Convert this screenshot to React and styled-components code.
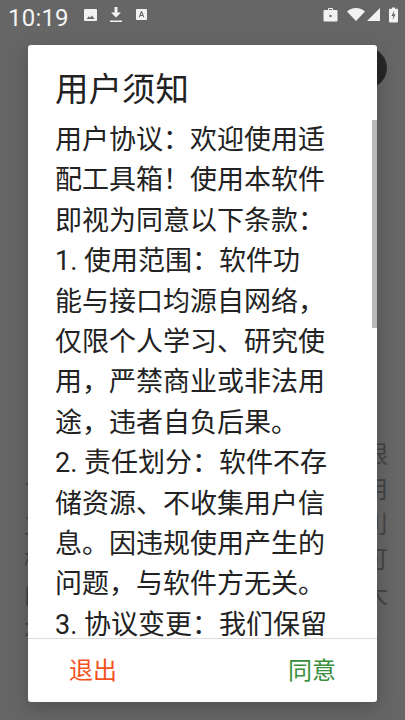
import React from 'react';
import styled, { createGlobalStyle } from 'styled-components';

const CJK = '"Roboto", "Noto Sans CJK SC", sans-serif';

const Global = createGlobalStyle`
  html, body { margin: 0; padding: 0; width: 405px; height: 720px; overflow: hidden; background: #666; font-family: ${CJK}; }
`;

const Screen = styled.div`
  position: relative;
  width: 405px;
  height: 720px;
  overflow: hidden;
  background: #666;
`;

const StatusBar = styled.div`
  height: 34px;
  box-sizing: border-box;
  padding: 1px 7px 0 8px;
  display: flex;
  align-items: center;
  color: #fff;
`;

const Clock = styled.span`
  font-size: 24px;
  color: #f4f4f4;
  letter-spacing: 0.2px;
  margin-right: 15px;
`;

const StatusIcons = styled.div`
  display: flex;
  align-items: center;
  gap: ${p => p.$gap}px;
  margin-left: ${p => (p.$end ? 'auto' : '0')};
  margin-bottom: ${p => (p.$nested ? 0 : 6)}px;
`;

const Backdrop = styled.div`
  padding-top: 0;
`;

const Fab = styled.div`
  width: 40px;
  height: 40px;
  border-radius: 50%;
  background: #272727;
  margin: 0 0 0 347px;
  transform: translateY(14px);
`;

const BehindText = styled.div`
  margin-top: 368px;
  padding: 0 17px 0 24px;
  display: flex;
  flex-direction: column;
  gap: 9px;
`;

const BehindLine = styled.div`
  display: flex;
  justify-content: space-between;
  font-size: 24px;
  line-height: 26px;
  color: #444;
`;

const Dialog = styled.div`
  position: absolute;
  left: 28px;
  top: 45px;
  width: 349px;
  height: 657px;
  background: #fff;
  border-radius: 3px;
  box-shadow: 0 6px 20px rgba(0, 0, 0, 0.22);
  display: flex;
  flex-direction: column;
  overflow: hidden;
`;

const Title = styled.h1`
  margin: 0;
  padding: 23px 27px 0;
  height: 59px;
  box-sizing: border-box;
  font-size: 33.5px;
  line-height: 44px;
  font-weight: 400;
  color: #222;
  flex: none;
`;

const ScrollArea = styled.div`
  position: relative;
  flex: 1;
  min-height: 0;
  overflow: hidden;
  border-bottom: 1px solid #dcdcdc;
`;

const Body = styled.div`
  padding: 16px 0 0 27px;
  font-size: 27px;
  line-height: 40.4px;
  color: #222;
`;

const Line = styled.p`
  margin: 0;
  white-space: nowrap;
`;

const Thumb = styled.div`
  position: absolute;
  right: 0;
  top: 16px;
  width: 5px;
  height: 208px;
  background: #b9b9b9;
`;

const Actions = styled.div`
  flex: none;
  height: 63px;
  display: flex;
  align-items: center;
  justify-content: space-between;
  padding: 0 41px;
`;

const Action = styled.button`
  border: 0;
  background: none;
  padding: 0;
  font: 400 24px/32px ${CJK};
  color: ${p => p.$color};
`;

const lines = [
  '用户协议\uFF1A欢迎使用适',
  '配工具箱\uFF01使用本软件',
  '即视为同意以下条款\uFF1A',
  '1. 使用范围\uFF1A软件功',
  '能与接口均源自网络\uFF0C',
  '仅限个人学习、研究使',
  '用\uFF0C严禁商业或非法用',
  '途\uFF0C违者自负后果。',
  '2. 责任划分\uFF1A软件不存',
  '储资源、不收集用户信',
  '息。因违规使用产生的',
  '问题\uFF0C与软件方无关。',
  '3. 协议变更\uFF1A我们保留',
];

const behind = [
  ['', '限'],
  ['1', '用'],
  ['主', '刂'],
  ['析', '可'],
  ['向', '大'],
  ['本', ''],
];

export default function App() {
  return (
    <Screen>
      <Global />
      <StatusBar>
        <Clock>10:19</Clock>
        <StatusIcons $gap={13}>
          <svg width="13" height="12" viewBox="0 0 13 12"><path fill="#f2f2f2" fillRule="evenodd" d="M1 0h11a1 1 0 0 1 1 1v10a1 1 0 0 1-1 1H1a1 1 0 0 1-1-1V1a1 1 0 0 1 1-1zM2.500 10h8L8 6.400 6.200 8.700 4.900 7.300z" /></svg>
          <svg width="12" height="15" viewBox="0 0 12 15"><path fill="#f2f2f2" d="M4.500 0h3v5.500H11L6 10.500 1 5.500h3.500zM0 13.400h12V15H0z" /></svg>
          <svg width="11" height="11" viewBox="0 0 12 12" style={{ marginLeft: 1 }}><path fill="#f2f2f2" fillRule="evenodd" d="M1 0h10a1 1 0 0 1 1 1v10a1 1 0 0 1-1 1H1a1 1 0 0 1-1-1V1a1 1 0 0 1 1-1zM5.300 2.500 3 9h1.300l.4-1.300h2.600L7.700 9H9L6.700 2.500zM5.100 6.500 6 4l.9 2.500z" /></svg>
        </StatusIcons>
        <StatusIcons $end $gap={9}>
          <svg width="15" height="14" viewBox="0 0 15 14"><path fill="#f2f2f2" fillRule="evenodd" d="M5 2V1a1 1 0 0 1 1-1h3a1 1 0 0 1 1 1v1h3.500a1 1 0 0 1 1 1v9.500a1 1 0 0 1-1 1h-12a1 1 0 0 1-1-1V3a1 1 0 0 1 1-1zM6 1v1h3V1zM7.500 6.800a1.200 1.200 0 1 0 0 2.400 1.200 1.200 0 0 0 0-2.400z" /></svg>
          <StatusIcons $nested $gap={2}>
            <svg width="18" height="13" viewBox="0 0 16 13" preserveAspectRatio="none"><path fill="#f2f2f2" d="M0 3.500C2 1.400 4.800 0 8 0s6 1.400 8 3.500L8 13z" /></svg>
            <svg width="13" height="13" viewBox="0 0 14 14"><path fill="#f2f2f2" d="M14 0v14H0z" /></svg>
          </StatusIcons>
          <svg width="9" height="16" viewBox="0 0 9 15"><path fill="#f2f2f2" fillRule="evenodd" d="M3 0h3v1.200h2a1 1 0 0 1 1 1V14a1 1 0 0 1-1 1H1a1 1 0 0 1-1-1V2.200a1 1 0 0 1 1-1h2zM5.200 3 2.500 8.500h1.800L3.600 12.500 6.600 6.800H4.700z" /></svg>
        </StatusIcons>
      </StatusBar>
      <Backdrop>
        <Fab />
        <BehindText>
          {behind.map(([l, r], i) => (
            <BehindLine key={i}><span>{l || '\u00a0'}</span><span>{r || '\u00a0'}</span></BehindLine>
          ))}
        </BehindText>
      </Backdrop>
      <Dialog>
        <Title>用户须知</Title>
        <ScrollArea>
          <Body>
            {lines.map(l => <Line key={l}>{l}</Line>)}
          </Body>
          <Thumb />
        </ScrollArea>
        <Actions>
          <Action $color="#f4511e">退出</Action>
          <Action $color="#388e3c">同意</Action>
        </Actions>
      </Dialog>
    </Screen>
  );
}
